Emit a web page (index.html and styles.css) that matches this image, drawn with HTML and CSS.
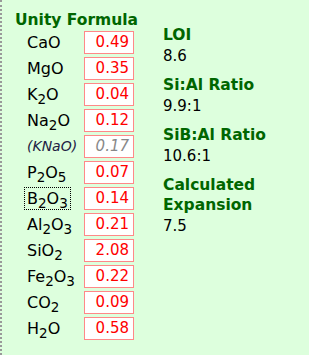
FILE: index.html
```html
<!DOCTYPE html>
<html>
<head>
<meta charset="utf-8">
<link rel="stylesheet" href="styles.css">
</head>
<body>
<div class="panel">
  <div class="formula">
    <h2 class="title">Unity Formula</h2>
    <div class="rows">
      <span class="ox">CaO</span><span class="val">0.49</span>
      <span class="ox">MgO</span><span class="val">0.35</span>
      <span class="ox">K<sub>2</sub>O</span><span class="val">0.04</span>
      <span class="ox">Na<sub>2</sub>O</span><span class="val">0.12</span>
      <span class="ox knao">(KNaO)</span><span class="val calc">0.17</span>
      <span class="ox">P<sub>2</sub>O<sub>5</sub></span><span class="val">0.07</span>
      <span class="ox focus">B<sub>2</sub>O<sub>3</sub></span><span class="val">0.14</span>
      <span class="ox">Al<sub>2</sub>O<sub>3</sub></span><span class="val">0.21</span>
      <span class="ox">SiO<sub>2</sub></span><span class="val">2.08</span>
      <span class="ox">Fe<sub>2</sub>O<sub>3</sub></span><span class="val">0.22</span>
      <span class="ox">CO<sub>2</sub></span><span class="val">0.09</span>
      <span class="ox">H<sub>2</sub>O</span><span class="val">0.58</span>
    </div>
  </div>
  <div class="info">
    <div class="item"><div class="label">LOI</div><div class="num">8.6</div></div>
    <div class="item"><div class="label">Si:Al Ratio</div><div class="num">9.9:1</div></div>
    <div class="item"><div class="label">SiB:Al Ratio</div><div class="num">10.6:1</div></div>
    <div class="item"><div class="label">Calculated<br>Expansion</div><div class="num">7.5</div></div>
  </div>
</div>
</body>
</html>
```
FILE: styles.css
```css
html, body {
  margin: 0;
  padding: 0;
  background: #ddffdd;
  height: 100%;
}
body {
  font-family: "DejaVu Sans", Verdana, sans-serif;
  font-size: 15px;
  color: #000;
}
.panel {
  display: flex;
  border-left: 2px dotted #999;
  min-height: 355px;
  box-sizing: border-box;
  padding: 10px 0 0 13px;
}
.formula {
  width: 148px;
}
.title {
  margin: 0;
  font-size: 15.5px;
  line-height: 20px;
  color: #006600;
  font-weight: bold;
}
.rows {
  display: grid;
  grid-template-columns: 60px 50px;
  grid-auto-rows: 23px;
  row-gap: 3px;
  margin-top: 1px;
  margin-left: 9px;
}
.ox {
  justify-self: start;
  font-size: 16px;
  padding: 0 2px;
  line-height: 21px;
  height: 23px;
  box-sizing: border-box;
  border: 1px solid transparent;
  white-space: nowrap;
}
.ox sub {
  font-size: 13.5px;
  line-height: 0;
  vertical-align: -4px;
}
.knao {
  font-style: italic;
  font-size: 14px;
  color: #222244;
}
.focus {
  border: 1px dotted #000;
}
.val {
  height: 23px;
  box-sizing: border-box;
  border: 1px solid #ff8888;
  background: #fff;
  color: #ff0000;
  text-align: right;
  padding-right: 4px;
  line-height: 21px;
}
.calc {
  color: #888;
  font-style: italic;
}
.info {
  padding-top: 15px;
}
.item {
  margin-bottom: 8px;
}
.label {
  color: #006600;
  font-weight: bold;
  font-size: 15.5px;
  line-height: 20px;
}
.num {
  line-height: 22px;
}
```
